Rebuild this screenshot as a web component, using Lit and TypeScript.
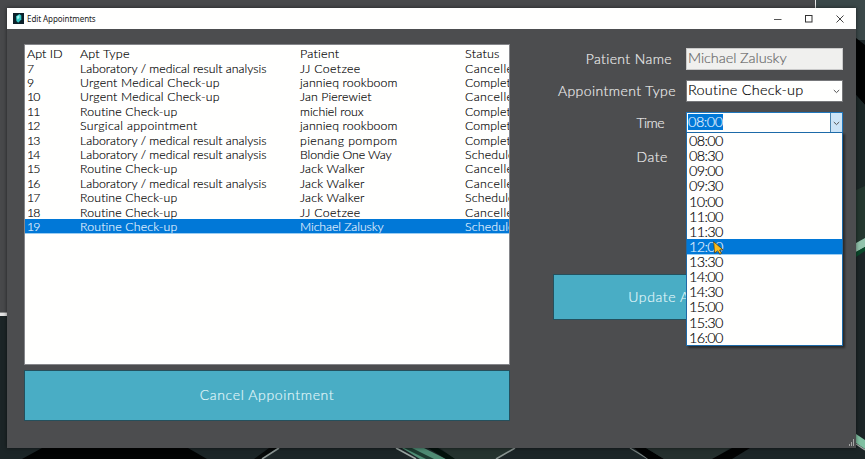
import { LitElement, html, css, svg } from "lit";
import { customElement, property } from "lit/decorators.js";

/** A single line of text whose tracking is tuned so that it fills `w` pixels. */
@customElement("fit-text")
class FitText extends LitElement {
  @property({ type: Number }) w = 0;
  @property() text = "";
  static styles = css`
    :host { display: inline-block; white-space: pre; }
    .t { display: inline-block; white-space: pre; }
  `;
  async firstUpdated() {
    await document.fonts.ready;
    const el = this.renderRoot.querySelector(".t") as HTMLElement;
    const n = this.text.length;
    if (this.w && n > 1) {
      const d = (this.w - 0.4 - el.getBoundingClientRect().width) / n;
      el.style.letterSpacing = d.toFixed(3) + "px";
    }
  }
  render() {
    return html`<span class="t">${this.text}</span>`;
  }
}

const typeW: Record<string, number> = {
  "Laboratory / medical result analysis": 187,
  "Urgent Medical Check-up": 140,
  "Routine Check-up": 98,
  "Surgical appointment": 118,
};
const patientW: Record<string, number> = {
  "JJ Coetzee": 61, "jannieq rookboom": 98, "Jan Pierewiet": 72, "michiel roux": 64,
  "pienang pompom": 98, "Blondie One Way": 92, "Jack Walker": 65, "Michael Zalusky": 84,
};
const statusW: Record<string, number> = { Cancelled: 56, Completed: 59.5, Scheduled: 57 };

const L = "Laboratory / medical result analysis";
const U = "Urgent Medical Check-up";
const R = "Routine Check-up";
const rows: [string, string, string, string][] = [
  ["7", L, "JJ Coetzee", "Cancelled"],
  ["9", U, "jannieq rookboom", "Completed"],
  ["10", U, "Jan Pierewiet", "Cancelled"],
  ["11", R, "michiel roux", "Completed"],
  ["12", "Surgical appointment", "jannieq rookboom", "Completed"],
  ["13", L, "pienang pompom", "Completed"],
  ["14", L, "Blondie One Way", "Scheduled"],
  ["15", R, "Jack Walker", "Cancelled"],
  ["16", L, "Jack Walker", "Cancelled"],
  ["17", R, "Jack Walker", "Scheduled"],
  ["18", R, "JJ Coetzee", "Cancelled"],
  ["19", R, "Michael Zalusky", "Scheduled"],
];
const times = ["08:00", "08:30", "09:00", "09:30", "10:00", "11:00", "11:30", "12:00",
  "13:30", "14:00", "14:30", "15:00", "15:30", "16:00"];

const fit = (text: string, w: number) => html`<fit-text .text=${text} .w=${w}></fit-text>`;
const chevron = html`<svg class="chev" width="7" height="5" viewBox="0 0 7 5"><path d="M.8 1l2.7 2.6L6.2 1" fill="none" stroke="#555" stroke-width="1"/></svg>`;

const desktop = svg`
  <rect width="865" height="459" fill="#1c2527"/>
  <path d="M42 448H188L207 459H22Z" fill="#020303"/>
  <path d="M269 448h8l-14 11h-9z" fill="#060909"/>
  <path d="M279 448l-17 11" stroke="#8b9593" stroke-width="1.6"/>
  <path d="M396 448l20 11" stroke="#9aa5a2" stroke-width="1.6"/>
  <path d="M402 448h22l22 11h-26z" fill="#4f8c74"/>
  <path d="M404 448h8l22 11h-8z" fill="#1d3c31"/>
  <path d="M428 448h10l18 11h-10z" fill="#03120c"/>
  <path d="M440 448h76l-18 11h-43z" fill="#25332f"/>
  <path d="M515 448l-19 11" stroke="#8b9593" stroke-width="1.6"/>
  <path d="M630 448l18 11" stroke="#78817f" stroke-width="1.2"/>
  <path d="M634 448h12l18 11h-16z" fill="#020303"/>
  <path d="M646 448h84l-16 11h-50z" fill="#25302e"/>
  <path d="M732 448h18l-18 11h-20z" fill="#020303"/>
  <rect width="815" height="9" fill="#48494b"/>
  <rect y="8" width="8" height="304" fill="#48494b"/>
  <rect x="815" width="1" height="9" fill="#e9eaea"/>
  <rect x="816" width="49" height="40" fill="#3b4849"/>
  <path d="M856 38l9 7v60l-9-10z" fill="#020303"/>
  <path d="M856 95l9 10v137l-9 3z" fill="#1b2626"/>
  <path d="M856 190l9-4v52l-9 5z" fill="#24372f"/>
  <path d="M856 243l9-5v9l-9 5z" fill="#93c4ad"/>
  <path d="M856 252l9-5v4l-9 6z" fill="#0b4a2c"/>
  <path d="M856 434l9 6v9l-9-6z" fill="#80c0a2"/>
  <path d="M856 444l9 6" stroke="#a6adab" stroke-width="1.2"/>
  <rect y="312" width="8" height="1" fill="#8a8b8b"/>
  <rect y="313" width="8" height="3" fill="#e4e4e4"/>
`;

const shared = css`
  * { box-sizing: border-box; }
  .btn {
    background: #49adc5; border: 1px solid #24505d; color: #e4f8fb; font-size: 14px;
    display: flex; align-items: center; justify-content: center;
  }
  .sel { background: #0178d7; color: #e4f2ff; box-shadow: 0 1px 0 #9bcdf2; }
`;

/** Right-hand form: appointment fields, update button and the opened time list. */
@customElement("edit-form")
class EditForm extends LitElement {
  static styles = [shared, css`
    :host { display: block; position: relative; width: 333px; flex: none; }
    .form { padding: 4px 0 0 43px; }
    .field { display: grid; grid-template-columns: 123px 10px 157px; align-items: center; height: 22px; }
    .label { justify-self: end; color: #f0f0f0; font-size: 14px; line-height: 20px; white-space: nowrap; }
    .box {
      height: 22px; background: #fffffe; border: 1px solid #76777a; font-size: 14.5px; color: #000;
      line-height: 17px; padding-left: 1px; display: flex; justify-content: space-between;
    }
    .off { background: #f0f0ee; color: #666; border-color: #c9c9c9; line-height: 18px; }
    .type, .time { margin-top: 10px; }
    .date { margin-top: 12px; }
    .name .label { padding-right: 4px; }
    .type .label { padding-right: 0; }
    .time .label { padding-right: 12px; }
    .date .label { padding-right: 8px; }
    .chev { margin: 8px 2px 0 0; flex: none; }
    .active { border-color: #2178bd; }
    .hl { background: #0178d7; color: #e4f2ff; height: 16px; margin-top: 1px; line-height: 15px; }
    .drop { width: 12px; background: #cce4f7; border-left: 1px solid #4a83ae; padding-left: 2px; line-height: 12px; }
    .drop .chev { display: block; }
    .update { width: 288px; height: 46px; margin-top: 106px; padding-bottom: 1px; }
    .menu {
      position: absolute; left: 176px; top: 88px; width: 157px; height: 214px; background: #fffffe;
      border: 1px solid #1d6aa8; box-shadow: 2px 2px 2px rgba(0,0,0,.45); font-size: 14.5px; color: #000; z-index: 2;
    }
    .opt { height: 15.14px; line-height: 15.14px; padding-left: 2px; }
    .cursor { position: absolute; left: 203px; top: 197px; z-index: 3; }
  `];
  render() {
    return html`
      <div class="form">
        <div class="field name"><span class="label">${fit("Patient Name", 87)}</span><i></i>
          <div class="box off">${fit("Michael Zalusky", 99)}</div></div>
        <div class="field type"><span class="label">${fit("Appointment Type", 118.5)}</span><i></i>
          <div class="box">${fit("Routine Check-up", 116)}${chevron}</div></div>
        <div class="field time"><span class="label">${fit("Time", 28)}</span><i></i>
          <div class="box active"><span class="hl">${fit("08:00", 35)}</span><span class="drop">${chevron}</span></div></div>
        <div class="field date"><span class="label">${fit("Date", 32)}</span></div>
        <div class="btn update">${fit("Update Appointment", 138)}</div>
      </div>
      <div class="menu">${times.map((t) => html`<div class="opt ${t === "12:00" ? "sel" : ""}">${fit(t, 34)}</div>`)}</div>
      <svg class="cursor" width="11" height="14" viewBox="0 0 11 14"><path d="M.6.6l9.4 8.2-3.4.2 2 3.3-1.8 1-2-3.5L1.6 12z" fill="#fcbc1c" stroke="#3a3218" stroke-width=".7"/></svg>`;
  }
}

@customElement("app-root")
class AppRoot extends LitElement {
  static styles = [shared, css`
    :host {
      display: block; position: relative; width: 865px; height: 459px; overflow: hidden;
      font-family: Lato, "Open Sans", sans-serif; font-weight: 300; -webkit-text-stroke: .15px currentColor;
    }
    .desk { position: absolute; inset: 0; display: block; }
    .frame { height: 459px; padding: 8px 0 0 7px; position: relative; }
    .window {
      width: 849px; height: 440px; background: #4c4d4f; box-shadow: 0 0 4px rgba(0,0,0,.55);
      display: flex; flex-direction: column;
    }
    .bar { height: 21px; background: #fffffe; display: flex; align-items: center; padding: 0 12px 0 6px; flex: none; }
    .logo { display: block; margin-right: 3px; }
    .title { font: 400 8px/20px "Noto Sans", "Open Sans", sans-serif; color: #222; flex: 1; -webkit-text-stroke: 0; }
    .ctl { display: flex; gap: 23px; align-items: center; }
    .body { flex: 1; display: flex; padding: 15px 0 0 17px; position: relative; }
    .left { width: 486px; flex: none; }
    .list {
      height: 321px; background: #fffffe; border: 1px solid #85868a; overflow: hidden;
      font-size: 12.3px; color: #000; padding-top: 1px;
    }
    .row {
      display: grid; grid-template-columns: 53px 220px 165px 100px; height: 14.42px; line-height: 15px;
      padding-left: 2px; white-space: nowrap; width: 600px;
    }
    .head { height: 14.6px; font-size: 12.6px; }
    .cancel { height: 51px; margin-top: 5px; padding-bottom: 2px; }
    .grip { position: absolute; right: 1px; bottom: 2px; }
  `];
  render() {
    return html`
      <svg class="desk" width="865" height="459">${desktop}</svg>
      <div class="frame"><div class="window">
        <div class="bar">
          <svg class="logo" width="11" height="11" viewBox="0 0 11 11"><rect width="11" height="11" fill="#0c2029"/><path d="M3 3.2L6.5 1l1.8 1.5v4L5.2 9.8 3.4 8z" fill="#35c8c6"/><path d="M4 3.5L6.4 2v3L4.4 6.4z" fill="#a5f5ee"/></svg>
          <span class="title">${fit("Edit Appointments", 69)}</span>
          <div class="ctl">
            <svg width="8" height="8"><path d="M0 4.5h7.5" stroke="#555"/></svg>
            <svg width="8" height="8"><rect x=".5" y=".5" width="6.5" height="6.5" fill="none" stroke="#333"/></svg>
            <svg width="8" height="8"><path d="M.5.5l7 7M7.5.5l-7 7" stroke="#444"/></svg>
          </div>
        </div>
        <div class="body">
          <div class="left">
            <div class="list">
              <div class="row head">${fit("Apt ID", 36)}${fit("Apt Type", 50)}${fit("Patient", 40)}${fit("Status", 35)}</div>
              ${rows.map(([id, t, p, s]) => html`<div class="row ${id === "19" ? "sel" : ""}">
                ${fit(id, id.length > 1 ? 13 : 0)}${fit(t, typeW[t])}${fit(p, patientW[p])}${fit(s, statusW[s])}</div>`)}
            </div>
            <div class="btn cancel">${fit("Cancel Appointment", 135)}</div>
          </div>
          <edit-form></edit-form>
          <svg class="grip" width="7" height="7"><path d="M1 5h1v2H1zM3 3h1v4H3zM5 0h1v7H5z" fill="#a5a5a5"/></svg>
        </div>
      </div></div>`;
  }
}
